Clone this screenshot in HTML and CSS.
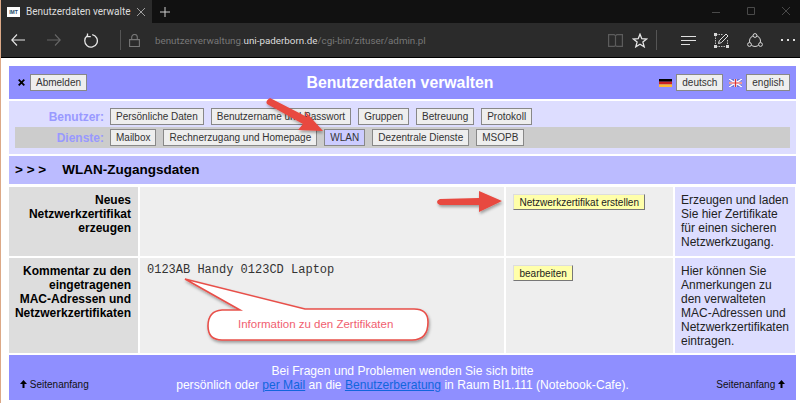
FILE: index.html
```html
<!DOCTYPE html>
<html lang="de">

<head>
  <meta charset="UTF-8" />
  <title>Benutzerdaten verwalten</title>
  <link rel="stylesheet" href="styles.css">
</head>

<body>
  <!-- Browser chrome -->
  <div class="tabbar">
    <div class="tab">
      <span class="favicon">IMT</span>
      <span class="tab-title">Benutzerdaten verwalte</span>
      <svg class="tab-close" width="8" height="8" viewBox="0 0 8 8"><path d="M0 0l8 8M8 0L0 8" stroke="#a0a0a0" fill="none" /></svg>
    </div>
    <svg class="tab-new" width="10" height="10" viewBox="0 0 10 10"><path d="M5 0v10M0 5h10" stroke="#cfcfcf" fill="none" /></svg>
    <div class="window-btns">
      <svg width="9" height="9" viewBox="0 0 9 9"><path d="M0 5.500h8" stroke="#4a4a4a" fill="none" /></svg>
      <svg width="9" height="9" viewBox="0 0 9 9"><path d="M.5.500h7v7h-7z" stroke="#4a4a4a" fill="none" /></svg>
      <svg width="9" height="9" viewBox="0 0 9 9"><path d="M0 0l8 8M8 0L0 8" stroke="#4a4a4a" fill="none" /></svg>
    </div>
  </div>
  <div class="toolbar">
    <svg class="nav-icon" width="14" height="12" viewBox="0 0 14 12"><path d="M14 6H1M6 .5L.8 6 6 11.500" stroke="#e6e6e6" stroke-width="1.100" fill="none" /></svg>
    <svg class="nav-icon" width="14" height="12" viewBox="0 0 14 12"><path d="M0 6h13M8 .5L13.200 6 8 11.500" stroke="#666" stroke-width="1.100" fill="none" /></svg>
    <svg class="nav-icon" width="15" height="15" viewBox="0 0 15 15"><path d="M4.200 2.800a6.300 6.300 0 1 0 5-1.200M4.500.5v3.200h3.300" stroke="#e6e6e6" stroke-width="1.300" fill="none" /></svg>
    <span class="divider"></span>
    <svg class="lock" width="11" height="13" viewBox="0 0 11 13"><path d="M.6 5.600h9.800v6.900H.6zM2.700 5.600V3.300a2.800 2.800 0 0 1 5.600 0v2.300" stroke="#777" stroke-width="1.100" fill="none" /></svg>
    <div class="url">benutzerverwaltung.<b>uni-paderborn.de</b>/cgi-bin/zituser/admin.pl</div>
    <svg class="book" width="15" height="13" viewBox="0 0 15 13"><path d="M.6.600h5.500l1.400 1.200L8.900.600h5.500v11.800H8.900l-1.400-.6-1.400.6H.6zM7.500 1.800v10" stroke="#5c5c5c" stroke-width="1.200" fill="none" /></svg>
    <svg class="star" width="16" height="15" viewBox="0 0 16 15"><path d="M8 1.200l1.800 4.500 4.900.3-3.800 3.100 1.300 4.700L8 11.200l-4.200 2.600 1.300-4.700L1.300 6l4.900-.3z" stroke="#e6e6e6" stroke-width="1.300" fill="none" /></svg>
    <span class="divider divider-right"></span>
    <svg class="tool-icon" width="15" height="9" viewBox="0 0 15 9"><path d="M0 .5h15M0 4.500h15M0 8.500h9" stroke="#e0e0e0" fill="none" /></svg>
    <svg class="tool-icon" width="15" height="15" viewBox="0 0 15 15"><path d="M2 1.500h7M1.500 2v11M13.500 7v6M2 13.500h11" stroke="#bbb" stroke-dasharray="1.500 1" fill="none" /><path d="M4.500 10.500l.8-2.800L12 1l2 2-6.700 6.700z" stroke="#e0e0e0" fill="none" /><path d="M0 0h3v3H0zM0 12h3v3H0zM12 12h3v3h-3z" fill="#d8d8d8" /></svg>
    <svg class="tool-icon" width="16" height="15" viewBox="0 0 16 15"><circle cx="8" cy="8" r="5.500" stroke="#d8d8d8" fill="none" /><circle cx="8" cy="2.500" r="1.900" fill="#2b2b2b" stroke="#d8d8d8" /><circle cx="2.500" cy="11.500" r="1.900" fill="#2b2b2b" stroke="#d8d8d8" /><circle cx="13.500" cy="11.500" r="1.900" fill="#2b2b2b" stroke="#d8d8d8" /></svg>
    <svg class="more" width="15" height="3" viewBox="0 0 15 3"><path d="M0 0h2v2H0zM6 0h2v2H6zM12 0h2v2h-2z" fill="#ddd" /></svg>
  </div>

  <div class="page">
    <!-- Header -->
    <div class="header">
      <div class="header-side">
        <svg class="x-mark" width="7" height="7" viewBox="0 0 7 7"><path d="M.7.700l5.600 5.600M6.300.700L.7 6.300" stroke="#000" stroke-width="1.800" fill="none" /></svg>
        <button class="btn">Abmelden</button>
      </div>
      <h1>Benutzerdaten verwalten</h1>
      <div class="header-side lang">
        <svg width="13" height="8" viewBox="0 0 13 8"><rect width="13" height="2.700" fill="#000" /><rect y="2.700" width="13" height="2.700" fill="#c22" /><rect y="5.400" width="13" height="2.600" fill="#fb3" /></svg>
        <button class="btn">deutsch</button>
        <svg class="flag-uk" width="13" height="8" viewBox="0 0 13 8"><rect width="13" height="8" fill="#6a72d8" /><path d="M0 0l13 8M13 0L0 8" stroke="#fff" stroke-width="1.400" /><path d="M6.500 0v8M0 4h13" stroke="#fff" stroke-width="2.400" /><path d="M6.500 0v8M0 4h13" stroke="#d33" stroke-width="1.200" /></svg>
        <button class="btn">english</button>
      </div>
    </div>

    <!-- Menu -->
    <div class="menu">
      <div class="menu-row">
        <span class="menu-label">Benutzer:</span>
        <button class="btn">Persönliche Daten</button>
        <button class="btn">Benutzername und Passwort</button>
        <button class="btn">Gruppen</button>
        <button class="btn">Betreuung</button>
        <button class="btn">Protokoll</button>
      </div>
      <div class="menu-row active-row">
        <span class="menu-label">Dienste:</span>
        <button class="btn">Mailbox</button>
        <button class="btn">Rechnerzugang und Homepage</button>
        <button class="btn btn-current">WLAN</button>
        <button class="btn">Dezentrale Dienste</button>
        <button class="btn">MSOPB</button>
      </div>
    </div>

    <div class="section-title"><span class="chevrons">&gt; &gt; &gt;</span>WLAN-Zugangsdaten</div>

    <!-- Data table -->
    <div class="data-table">
      <div class="cell-label">Neues<br>Netzwerkzertifikat<br>erzeugen</div>
      <div class="cell-value"></div>
      <div class="cell-action"><button class="btn btn-yellow">Netzwerkzertifikat erstellen</button></div>
      <div class="cell-help">Erzeugen und laden Sie hier Zertifikate für einen sicheren Netzwerkzugang.</div>

      <div class="cell-label">Kommentar zu den<br>eingetragenen<br>MAC-Adressen und<br>Netzwerkzertifikaten</div>
      <div class="cell-value mono">0123AB Handy 0123CD Laptop</div>
      <div class="cell-action"><button class="btn btn-yellow">bearbeiten</button></div>
      <div class="cell-help">Hier können Sie Anmerkungen zu den verwalteten MAC-Adressen und Netzwerkzertifikaten eintragen.</div>
    </div>

    <!-- Footer -->
    <div class="footer">
      <a class="top-link" href="#">
        <svg width="7" height="8" viewBox="0 0 7 8"><path d="M3.500 0L7 4H4.500v4h-2V4H0z" fill="#000" /></svg>
        Seitenanfang
      </a>
      <div class="footer-text">
        Bei Fragen und Problemen wenden Sie sich bitte<br>
        persönlich oder <a href="#">per Mail</a> an die <a href="#">Benutzerberatung</a> in Raum BI1.111 (Notebook-Cafe).
      </div>
      <a class="top-link top-link-right" href="#">
        Seitenanfang
        <svg width="7" height="8" viewBox="0 0 7 8"><path d="M3.500 0L7 4H4.500v4h-2V4H0z" fill="#000" /></svg>
      </a>
    </div>
  </div>

  <!-- Annotations drawn over the screenshot -->
  <svg class="annotations" width="800" height="403" viewBox="0 0 800 403">
    <defs>
      <filter id="soft" x="-20%" y="-20%" width="140%" height="140%">
        <feDropShadow dx="1" dy="2" stdDeviation="1.500" flood-color="#000" flood-opacity="0.35" />
      </filter>
    </defs>
    <path d="M270 98L307 117 305 111 323 131 298 130 303 124 267 104Q265 101 270 98z" fill="#e8483f" filter="url(#soft)" />
    <path d="M440 199L479 198V191L502 201 479 212V205L440 205Q437 204 437 202 437 200 440 199z" fill="#e8483f" filter="url(#soft)" />
    <path d="M185 279L305 309H414Q428 309 428 322 428 340 412 340H222Q208 340 208 326 208 311 222 310H240z" fill="#fff" stroke="#e8504a" stroke-width="1.600" filter="url(#soft)" />
  </svg>
  <div class="callout-text">Information zu den Zertifikaten</div>
</body>

</html>
```

FILE: styles.css
```css
body {
  margin: 0;
  height: 403px;
  overflow: hidden;
  background-color: #fff;
  border-left: 1px solid #dca987;
  font-family: "Liberation Sans", Arial, sans-serif;
  color: #222;
  font-size: 12px;
}

/* Browser chrome */
.tabbar {
  display: flex;
  align-items: center;
  height: 23px;
  background-color: #111;
}

.tab {
  display: flex;
  align-items: center;
  width: 151px;
  height: 23px;
  box-sizing: border-box;
  padding-left: 6px;
  background-color: #2b2b2b;
}

.favicon {
  width: 13px;
  height: 10px;
  background-color: #fff;
  color: #246;
  font-size: 5px;
  font-weight: bold;
  line-height: 10px;
  text-align: center;
}

.tab-title {
  width: 111px;
  margin-left: 6px;
  color: #ddd;
  font-family: Roboto, sans-serif;
  font-size: 10px;
  white-space: nowrap;
}

.tab-new {
  margin-left: 8px;
}

.window-btns {
  display: flex;
  gap: 26px;
  margin-left: auto;
  padding-right: 9px;
}

.toolbar {
  display: flex;
  align-items: center;
  height: 34px;
  background-color: #2b2b2b;
  border-bottom: 1px solid #000;
  padding-left: 10px;
}

.nav-icon {
  margin-right: 22px;
}

.divider {
  width: 1px;
  height: 20px;
  background-color: #555;
}

.lock {
  margin-left: 8px;
}

.url {
  flex: 1;
  margin-left: 15px;
  color: #777;
  font-family: Roboto, sans-serif;
  font-size: 9.800px;
}

.url b {
  color: #ddd;
  font-weight: normal;
}

.book {
  margin-right: 9px;
}

.star {
  margin-right: 8px;
}

.divider-right {
  margin-right: 24px;
}

.tool-icon {
  margin-right: 18px;
}

.more {
  margin-right: 4px;
}

/* Page */
.page {
  display: flex;
  flex-direction: column;
  gap: 2px;
  padding: 8px 4px 0 8px;
}

.btn {
  height: 17px;
  padding: 0 5px;
  border: 1px solid #888;
  border-radius: 0;
  background-color: #eee;
  color: #333;
  font-family: "Liberation Sans", Arial, sans-serif;
  font-size: 10px;
  white-space: nowrap;
}

.header {
  display: grid;
  grid-template-columns: 1fr auto 1fr;
  align-items: center;
  height: 33px;
  padding: 0 6px 0 9px;
  background-color: #8f8fff;
}

.header h1 {
  margin: 0 8px 0 0;
  color: #fff;
  font-size: 15.800px;
  font-weight: bold;
}

.header-side {
  display: flex;
  align-items: center;
  gap: 4px;
}

.x-mark {
  margin-right: 1px;
}

.lang {
  justify-content: flex-end;
}

.lang .flag-uk {
  margin-left: 2px;
}

.menu {
  padding: 5px 6px 6px;
  background-color: #ddf;
}

.menu-row {
  display: flex;
  align-items: center;
  gap: 7px;
  height: 21px;
}

.active-row {
  background-color: #ccc;
}

.menu-label {
  width: 89px;
  margin-right: -1px;
  color: #99f;
  font-size: 12px;
  font-weight: bold;
  text-align: right;
}

.btn-current {
  background-color: #ccf;
}

.section-title {
  height: 28px;
  padding-left: 6px;
  background-color: #bbf;
  color: #000;
  font-size: 13.500px;
  font-weight: bold;
  line-height: 28px;
}

.chevrons {
  margin-right: 16px;
}

.data-table {
  display: grid;
  grid-template-columns: 129px 364px 167px 120px;
  grid-template-rows: 69px 95px;
  gap: 2px;
  margin-top: 1px;
}

.cell-label {
  padding: 6px 7px 0 4px;
  background-color: #ddd;
  color: #000;
  font-weight: bold;
  line-height: 14px;
  text-align: right;
}

.cell-value {
  padding: 5px 7px;
  background-color: #eee;
}

.mono {
  color: #333;
  font-family: "Liberation Mono", monospace;
  font-size: 12px;
}

.cell-action {
  padding: 7px;
  background-color: #eee;
}

.btn-yellow {
  display: block;
  height: 16px;
  padding: 0 5.500px;
  border: 1px solid #ddd;
  border-right-color: #777;
  border-bottom-color: #777;
  background-color: #ffa;
  color: #222;
}

.cell-help {
  padding: 6px 4px 0 6px;
  background-color: #ddf;
  line-height: 14px;
}

.footer {
  display: grid;
  grid-template-columns: 1fr auto 1fr;
  align-items: end;
  height: 45px;
  box-sizing: border-box;
  padding: 0 11px 8px;
  background-color: #8f8fff;
  color: #fff;
}

.footer-text {
  font-size: 12.100px;
  line-height: 14px;
  text-align: center;
}

.footer-text a {
  color: #1166dd;
}

.top-link {
  color: #111;
  font-size: 10px;
  line-height: 14px;
  text-decoration: none;
}

.top-link-right {
  text-align: right;
}

/* Annotations */
.annotations {
  position: absolute;
  top: 0;
  left: 0;
  pointer-events: none;
}

.callout-text {
  position: absolute;
  top: 318px;
  left: 238px;
  color: #f06070;
  font-size: 11.500px;
}
```
